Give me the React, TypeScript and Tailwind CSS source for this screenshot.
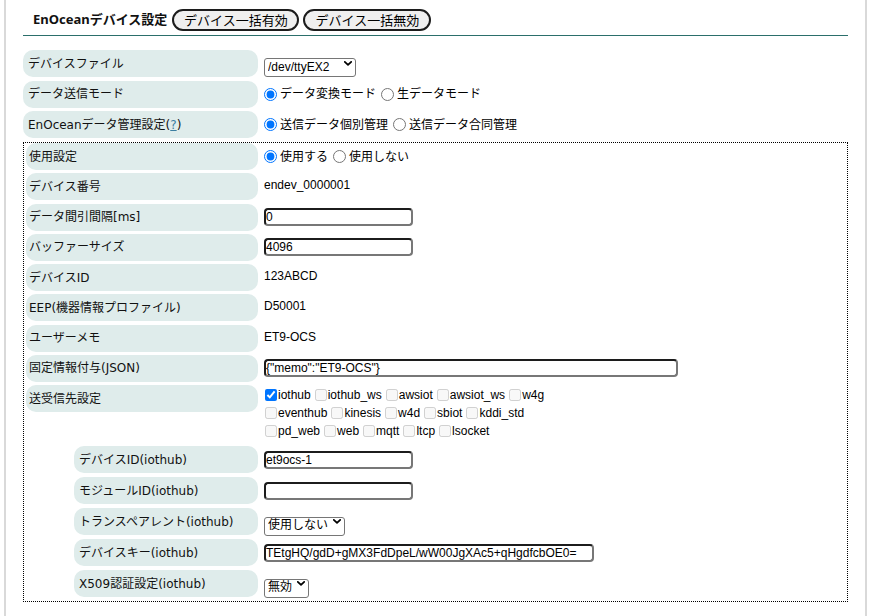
import { ReactNode } from "react";

const base = "font-['Liberation_Sans','Noto_Sans_CJK_JP',sans-serif]";
const jp = "font-['DejaVu_Sans','Noto_Sans_CJK_JP',sans-serif]";
const jpText = "font-['Noto_Sans','Noto_Sans_CJK_JP',sans-serif]";

function Label({ w, pl, children }: { w: string; pl: string; children: ReactNode }) {
    return (
        <div className={`${w} ${pl} h-[27px] shrink-0 rounded-[10px] bg-[#dfeceb] flex items-center text-[12px] text-[#111] ${jp}`}>
            {children}
        </div>
    );
}

function TextBox({ w, value }: { w: string; value: string }) {
    return (
        <input
            readOnly
            value={value}
            className={`${w} h-[18px] rounded-[4px] border-2 border-[#777] border-t-[#1c1c1c] border-l-[#1c1c1c] bg-white px-0 text-[12px] leading-none text-black outline-none ${base}`}
        />
    );
}

function Select({ w, value, cjk }: { w: string; value: string; cjk?: boolean }) {
    return (
        <div className={`relative ${w} h-[19px]`}>
            <select
                defaultValue={value}
                className={`h-full w-full appearance-none rounded-[3px] border border-[#767676] bg-white pl-[3px] pr-[12px] text-[12px] leading-[15px] text-black outline-none ${cjk ? "pt-0 pb-[3px]" : "py-0"} ${base}`}
            >
                <option value={value}>{value}</option>
            </select>
            <svg
                viewBox="0 0 10 6"
                className="pointer-events-none absolute right-[4px] top-[7px] h-[5px] w-[8px]"
            >
                <path d="M1 1 L5 4.8 L9 1" fill="none" stroke="#000" strokeWidth="2.2" strokeLinecap="round" strokeLinejoin="round" />
            </svg>
        </div>
    );
}

function Radios({ name, a, b }: { name: string; a: string; b: string }) {
    return (
        <div className={`flex items-center text-[12px] text-black ${jpText}`}>
            <input type="radio" name={name} defaultChecked className="m-0 mr-[3px] h-[13px] w-[13px]" />
            <span>{a}</span>
            <input type="radio" name={name} className="m-0 ml-[5px] mr-[3px] h-[13px] w-[13px]" />
            <span>{b}</span>
        </div>
    );
}

function Check({ label, on }: { label: string; on?: boolean }) {
    return (
        <span className="mr-[3px] inline-flex items-center">
            <input
                type="checkbox"
                defaultChecked={on}
                disabled={!on}
                className="m-0 ml-[1px] h-[12px] w-[12px]"
            />
            <span className="ml-[1px]">{label}</span>
        </span>
    );
}

function Value({ children }: { children: ReactNode }) {
    return <div className={`-mt-[3px] text-[12px] text-black ${base}`}>{children}</div>;
}

const lines = [
    ["iothub", "iothub_ws", "awsiot", "awsiot_ws", "w4g"],
    ["eventhub", "kinesis", "w4d", "sbiot", "kddi_std"],
    ["pd_web", "web", "mqtt", "ltcp", "lsocket"],
];

export default function App() {
    return (
        <div className={`h-[616px] w-[870px] overflow-hidden bg-white ${base}`}>
            <div className="ml-[4px] h-full w-[863px] border-x-2 border-[#d9d9d9] px-[17px] pt-[9px]">
                <div className="flex h-[22px] items-center pl-[10px]">
                    <span className={`text-[13px] font-bold text-[#111] ${jpText}`}>EnOceanデバイス設定</span>
                    <button className={`ml-[5px] h-[22px] w-[127px] rounded-full border-2 border-[#1c1c1c] bg-[#efefef] text-[13px] text-black ${jpText}`}>
                        デバイス一括有効
                    </button>
                    <button className={`ml-[4px] h-[22px] w-[128px] rounded-full border-2 border-[#1c1c1c] bg-[#efefef] text-[13px] text-black ${jpText}`}>
                        デバイス一括無効
                    </button>
                </div>
                <div className="mt-[4px] h-px w-full bg-[#2b6f6b]" />

                <div className="mt-[14px] flex flex-col gap-[3.5px]">
                    <div className="flex items-center gap-[6px]">
                        <Label w="w-[235px]" pl="pl-[5px]">デバイスファイル</Label>
                        <Select w="w-[92px]" value="/dev/ttyEX2" />
                    </div>
                    <div className="flex items-center gap-[6px]">
                        <Label w="w-[235px]" pl="pl-[5px]">データ送信モード</Label>
                        <Radios name="mode" a="データ変換モード" b="生データモード" />
                    </div>
                    <div className="flex items-center gap-[6px]">
                        <Label w="w-[235px]" pl="pl-[5px]">
                            EnOceanデータ管理設定(<span className="text-[#3b7ea1] underline">?</span>)
                        </Label>
                        <Radios name="manage" a="送信データ個別管理" b="送信データ合同管理" />
                    </div>
                </div>

                <div className="mt-[4px] flex w-full flex-col gap-[3.25px] border border-dotted border-black pb-[4px] pl-[2px]">
                    <div className="flex items-center gap-[6px]">
                        <Label w="w-[232px]" pl="pl-[3px]">使用設定</Label>
                        <Radios name="use" a="使用する" b="使用しない" />
                    </div>
                    <div className="flex items-center gap-[6px]">
                        <Label w="w-[232px]" pl="pl-[3px]">デバイス番号</Label>
                        <Value>endev_0000001</Value>
                    </div>
                    <div className="flex items-center gap-[6px]">
                        <Label w="w-[232px]" pl="pl-[3px]">データ間引間隔[ms]</Label>
                        <TextBox w="w-[149px]" value="0" />
                    </div>
                    <div className="flex items-center gap-[6px]">
                        <Label w="w-[232px]" pl="pl-[3px]">バッファーサイズ</Label>
                        <TextBox w="w-[149px]" value="4096" />
                    </div>
                    <div className="flex items-center gap-[6px]">
                        <Label w="w-[232px]" pl="pl-[3px]">デバイスID</Label>
                        <Value>123ABCD</Value>
                    </div>
                    <div className="flex items-center gap-[6px]">
                        <Label w="w-[232px]" pl="pl-[3px]">EEP(機器情報プロファイル)</Label>
                        <Value>D50001</Value>
                    </div>
                    <div className="flex items-center gap-[6px]">
                        <Label w="w-[232px]" pl="pl-[3px]">ユーザーメモ</Label>
                        <Value>ET9-OCS</Value>
                    </div>
                    <div className="flex items-center gap-[6px]">
                        <Label w="w-[232px]" pl="pl-[3px]">固定情報付与(JSON)</Label>
                        <TextBox w="w-[414px]" value={'{"memo":"ET9-OCS"}'} />
                    </div>
                    <div className="flex items-start gap-[6px]">
                        <Label w="w-[232px]" pl="pl-[3px]">送受信先設定</Label>
                        <div className="pt-[1px] text-[12px] leading-[18px] text-black">
                            {lines.map((line, i) => (
                                <div key={i} className="flex">
                                    {line.map((c) => (
                                        <Check key={c} label={c} on={c === "iothub"} />
                                    ))}
                                </div>
                            ))}
                        </div>
                    </div>

                    <div className="mt-[3px] flex flex-col gap-[4px] pl-[48px]">
                        <div className="flex items-center gap-[6px]">
                            <Label w="w-[184px]" pl="pl-[5px]">デバイスID(iothub)</Label>
                            <TextBox w="w-[149px]" value="et9ocs-1" />
                        </div>
                        <div className="flex items-center gap-[6px]">
                            <Label w="w-[184px]" pl="pl-[5px]">モジュールID(iothub)</Label>
                            <TextBox w="w-[149px]" value="" />
                        </div>
                        <div className="flex items-center gap-[6px]">
                            <Label w="w-[184px]" pl="pl-[5px]">トランスペアレント(iothub)</Label>
                            <Select w="w-[81px]" value="使用しない" cjk />
                        </div>
                        <div className="flex items-center gap-[6px]">
                            <Label w="w-[184px]" pl="pl-[5px]">デバイスキー(iothub)</Label>
                            <TextBox w="w-[330px]" value="TEtgHQ/gdD+gMX3FdDpeL/wW00JgXAc5+qHgdfcbOE0=" />
                        </div>
                        <div className="flex items-center gap-[6px]">
                            <Label w="w-[184px]" pl="pl-[5px]">X509認証設定(iothub)</Label>
                            <Select w="w-[45px]" value="無効" cjk />
                        </div>
                    </div>
                </div>
            </div>
        </div>
    );
}
